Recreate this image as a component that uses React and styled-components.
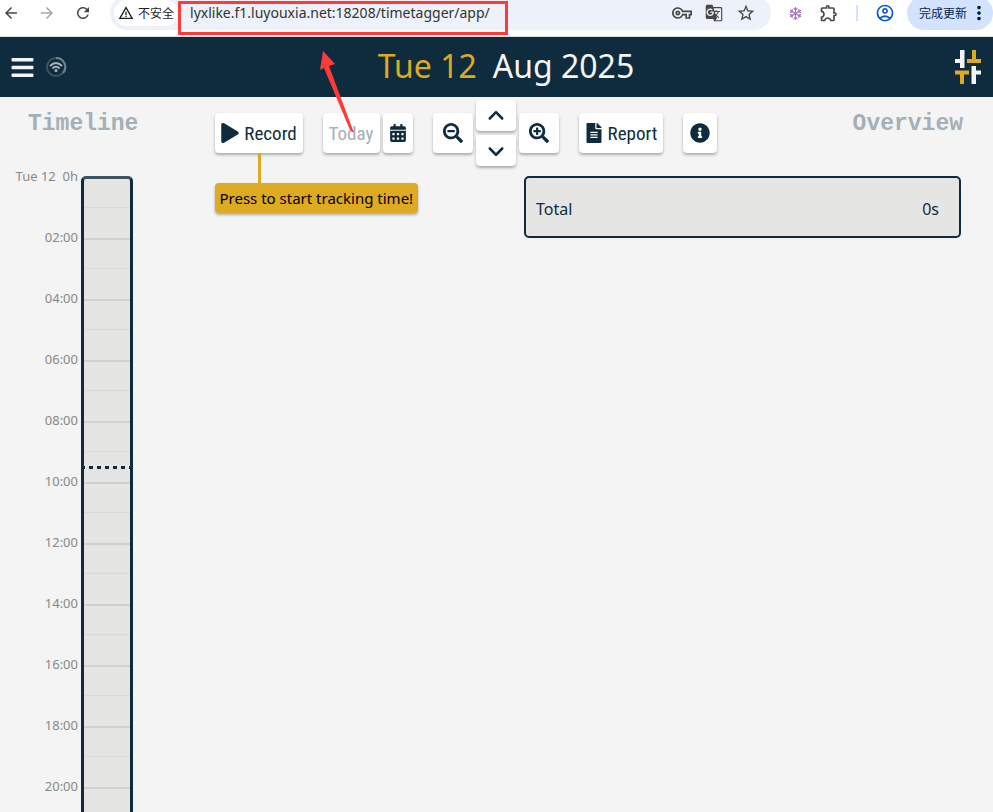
import styled, { createGlobalStyle } from "styled-components";
import {
  MdArrowBack,
  MdArrowForward,
  MdRefresh,
  MdWarningAmber,
  MdOutlineVpnKey,
  MdGTranslate,
  MdStarBorder,
  MdOutlineExtension,
  MdOutlineAccountCircle,
  MdMoreVert,
} from "react-icons/md";
import {
  FaPlay,
  FaCalendarAlt,
  FaSearchMinus,
  FaSearchPlus,
  FaFileAlt,
  FaInfoCircle,
  FaBars,
  FaRegSnowflake,
} from "react-icons/fa";
import { FaAngleUp, FaAngleDown } from "react-icons/fa6";

const hours = [
  "Tue 12  0h",
  "02:00",
  "04:00",
  "06:00",
  "08:00",
  "10:00",
  "12:00",
  "14:00",
  "16:00",
  "18:00",
  "20:00",
];

const HOUR_PAIR = 61;
const now = 9.5;

export default function App() {
  return (
    <Page>
      <GlobalStyle />
      <BrowserBar />
      <Header>
        <MenuButton aria-label="Menu">
          <FaBars size={25} />
        </MenuButton>
        <SyncIcon />
        <DateTitle>
          <Day>Tue 12</Day>
          <span>Aug 2025</span>
        </DateTitle>
        <Logo />
      </Header>
      <Controls>
        <Heading>Timeline</Heading>
        <Groups>
          <RecordWrapper>
            <Button $width={88}>
              <FaPlay size={20} />
              Record
            </Button>
            <Tip role="tooltip">Press to start tracking time!</Tip>
          </RecordWrapper>
          <Group>
            <Button $width={57} $faded>
              Today
            </Button>
            <Button $width={30} aria-label="Select date">
              <FaCalendarAlt size={18} />
            </Button>
          </Group>
          <Group>
            <Button $width={40} aria-label="Zoom out">
              <FaSearchMinus size={20} />
            </Button>
            <Stack>
              <Button $width={40} $short aria-label="Earlier">
                <FaAngleUp size={20} />
              </Button>
              <Button $width={40} $short aria-label="Later">
                <FaAngleDown size={20} />
              </Button>
            </Stack>
            <Button $width={40} aria-label="Zoom in">
              <FaSearchPlus size={20} />
            </Button>
          </Group>
          <Button $width={84}>
            <FaFileAlt size={20} />
            Report
          </Button>
          <Button $width={34} aria-label="Info">
            <FaInfoCircle size={20} />
          </Button>
        </Groups>
        <Heading>Overview</Heading>
      </Controls>
      <Content>
        <Labels>
          {hours.map((hour) => (
            <Label key={hour}>{hour}</Label>
          ))}
        </Labels>
        <Track>
          {hours.map((hour) => (
            <Slot key={hour} />
          ))}
          <NowLine style={{ top: (now / 2) * HOUR_PAIR - 3 }} />
        </Track>
        <Overview>
          <span>Total</span>
          <span>0s</span>
        </Overview>
      </Content>
    </Page>
  );
}

function BrowserBar() {
  return (
    <Bar>
      <IconButton aria-label="Back">
        <MdArrowBack size={18} />
      </IconButton>
      <IconButton aria-label="Forward" $color="#a5a5a5">
        <MdArrowForward size={18} />
      </IconButton>
      <IconButton aria-label="Reload">
        <MdRefresh size={18} />
      </IconButton>
      <AddressBar>
        <Security>
          <MdWarningAmber size={16} />
          不安全
        </Security>
        <UrlBox>
          <Url
            aria-label="Address"
            defaultValue="lyxlike.f1.luyouxia.net:18208/timetagger/app/"
          />
          <Highlight />
          <Arrow viewBox="0 0 36 84">
            <path
              d="M5 0L17 13L11 15L36 82L32 79L6 17L2 19Z"
              fill="#ff3a38"
            />
          </Arrow>
        </UrlBox>
        <AddressActions>
          <IconButton aria-label="Passwords">
            <MdOutlineVpnKey size={20} />
          </IconButton>
          <IconButton aria-label="Translate">
            <MdGTranslate size={18} />
          </IconButton>
          <IconButton aria-label="Bookmark">
            <MdStarBorder size={20} />
          </IconButton>
        </AddressActions>
      </AddressBar>
      <Extensions>
        <IconButton aria-label="Snowflake extension" $color="#a777bb">
          <FaRegSnowflake size={13} />
        </IconButton>
        <IconButton aria-label="Extensions">
          <MdOutlineExtension size={20} />
        </IconButton>
        <Divider />
        <IconButton aria-label="Profile" $color="#0b57d0">
          <MdOutlineAccountCircle size={20} />
        </IconButton>
      </Extensions>
      <Update>
        完成更新
        <MdMoreVert size={22} />
      </Update>
    </Bar>
  );
}

function SyncIcon() {
  return (
    <svg width="22" height="22" viewBox="0 0 22 22" fill="none">
      <circle cx="11" cy="11" r="9" stroke="#3c5463" strokeWidth="2" />
      <path d="M11 2A9 9 0 0 1 18 17" stroke="#71838d" strokeWidth="2" />
      <g stroke="#a9b4bb" strokeWidth="2">
        <path d="M5 10Q11 4 17 10" />
        <path d="M7.5 12.5Q11 9 14.5 12.5" />
      </g>
      <circle cx="11" cy="14.5" r="1.5" fill="#a9b4bb" />
    </svg>
  );
}

function Logo() {
  return (
    <svg width="26" height="34" viewBox="0 0 26 34">
      <path d="M5 0H9.5V18H5V13H0V9H5Z" fill="#f4f4f4" />
      <path d="M17 0H21V9H26V13H12V9H17Z" fill="#deaa22" />
      <path d="M0 20.5H14V24.5H9V34H5V24.5H0Z" fill="#deaa22" />
      <path d="M16.5 16H21V20.5H26V24.5H21V34H16.5Z" fill="#f4f4f4" />
    </svg>
  );
}

const GlobalStyle = createGlobalStyle`
  * {
    box-sizing: border-box;
  }
  body {
    margin: 0;
    background: #f4f4f4;
    color: #0f2c3e;
    font-family: "Noto Sans", "Noto Sans CJK SC", sans-serif;
  }
  button, input {
    font-family: inherit;
    border: 0;
    padding: 0;
    background: transparent;
    color: inherit;
  }
  svg {
    flex-shrink: 0;
  }
`;
const Page = styled.div`
  display: flex;
  flex-direction: column;
  height: 100vh;
  overflow: hidden;
`;
/* the top edge of the browser bar runs off the window */
const Bar = styled.div`
  display: flex;
  align-items: center;
  flex-shrink: 0;
  gap: 18px;
  margin-top: -4px;
  padding: 0 0 6px 2px;
  border-bottom: 1px solid #dcdcdc;
  background: #fff;
`;
const IconButton = styled.button`
  display: flex;
  color: ${({ $color }) => $color || "#474747"};
`;
const AddressBar = styled.div`
  display: flex;
  align-items: center;
  flex: 1;
  height: 34px;
  padding: 0 15px 0 4px;
  border-radius: 17px;
  background: #ecf1fa;
`;
const Security = styled.button`
  display: flex;
  align-items: center;
  gap: 4px;
  height: 26px;
  && {
    padding: 0 4px;
  }
  border-radius: 13px;
  background: #fff;
  font-size: 12px;
  color: #1f1f1f;
  white-space: nowrap;
`;
const UrlBox = styled.div`
  position: relative;
  display: flex;
  width: 330px;
`;
const Url = styled.input`
  width: 100%;
  && {
    padding: 0 12px;
  }
  font-size: 14px;
  line-height: 24px;
  color: #333;
  outline: 0;
`;
const Highlight = styled.div`
  position: absolute;
  inset: 0 0 -10px;
  border: 3px solid #ff3a38;
  pointer-events: none;
`;
const Arrow = styled.svg`
  position: absolute;
  top: 50px;
  left: 140px;
  z-index: 2;
  width: 36px;
  height: 84px;
  pointer-events: none;
`;
const AddressActions = styled.div`
  display: flex;
  align-items: center;
  gap: 13px;
  margin-left: auto;
`;
const Extensions = styled.div`
  display: flex;
  align-items: center;
  gap: 17px;
`;
const Divider = styled.span`
  width: 2px;
  height: 16px;
  background: #d3e3fd;
`;
const Update = styled.button`
  display: flex;
  align-items: center;
  height: 34px;
  gap: 1px;
  margin-left: -6px;
  && {
    padding: 0 3px 0 12px;
    background: #d3e3fd;
  }
  border-radius: 17px;
  font-size: 12px;
  color: #041e49;
  white-space: nowrap;
`;
const Header = styled.header`
  display: flex;
  align-items: center;
  flex-shrink: 0;
  height: 60px;
  padding: 0 12px 0 10px;
  background: #0f2c3e;
  color: #f4f4f4;
`;
const MenuButton = styled.button`
  display: flex;
  margin-right: 10px;
`;
const DateTitle = styled.h1`
  display: flex;
  justify-content: center;
  flex: 1;
  gap: 16px;
  margin: 0 10px 2px 0;
  font-size: 32px;
  font-weight: 400;
  line-height: 40px;
`;
const Day = styled.span`
  color: #deaa22;
`;
const Controls = styled.div`
  display: flex;
  justify-content: space-between;
  flex-shrink: 0;
  height: 79px;
  padding: 0 30px 0 28px;
`;
const Heading = styled.h2`
  margin: 13px 0 0;
  font-family: "Liberation Mono", monospace;
  font-size: 23px;
  font-weight: 700;
  line-height: 28px;
  color: #a3b0b7;
`;
const Groups = styled.div`
  display: flex;
  align-items: flex-start;
  gap: 20px;
  margin: 16px 60px 0 0;
`;
const Group = styled.div`
  display: flex;
  align-items: flex-start;
  gap: 3px;
`;
const RecordWrapper = styled.div`
  position: relative;
`;
const Stack = styled.div`
  display: flex;
  flex-direction: column;
  gap: 4px;
  margin-top: -13px;
`;
const Button = styled.button`
  display: flex;
  align-items: center;
  justify-content: center;
  gap: 4px;
  width: ${({ $width }) => $width}px;
  height: ${({ $short }) => ($short ? 31 : 40)}px;
  border-radius: 4px;
  && {
    background: #fff;
    color: ${({ $faded }) => ($faded ? "#a3b0b7" : "#0f2c3e")};
  }
  box-shadow: 0 2px 3px rgba(0, 0, 0, 0.3);
  font-family: "Ubuntu Condensed", "Roboto Condensed", "Noto Sans Condensed",
    "Open Sans Condensed", "Noto Sans", sans-serif;
  font-size: 19px;
  white-space: nowrap;
  cursor: pointer;
`;
const Tip = styled.div`
  position: absolute;
  top: 70px;
  left: 0;
  z-index: 1;
  padding: 0 5px;
  border-radius: 4px;
  background: #deaa22;
  box-shadow: 0 2px 3px rgba(0, 0, 0, 0.3);
  font-size: 15px;
  line-height: 30px;
  color: #000;
  white-space: nowrap;
  &::before {
    content: "";
    position: absolute;
    bottom: 100%;
    left: 43px;
    width: 3px;
    height: 30px;
    background: #deaa22;
  }
`;
const Content = styled.main`
  display: flex;
  align-items: flex-start;
  flex: 1;
  min-height: 0;
`;
const Labels = styled.div`
  width: 81px;
  padding-right: 3px;
  margin-top: -10px;
`;
const Label = styled.div`
  height: ${HOUR_PAIR}px;
  font-size: 13px;
  line-height: 20px;
  text-align: right;
  white-space: pre;
  color: #888;
`;
const Track = styled.div`
  position: relative;
  width: 52px;
  border: 3px solid #0f2c3e;
  border-top-color: #3d5362;
  border-radius: 5px;
  background: #e5e5e3;
`;
const Slot = styled.div`
  height: ${HOUR_PAIR}px;
  border-bottom: 2px solid #d0d0cf;
  background: linear-gradient(#dadad9, #dadad9) 0 28px / 100% 1px no-repeat;
`;
const NowLine = styled.div`
  position: absolute;
  left: 0;
  right: 0;
  height: 3px;
  background: repeating-linear-gradient(
    90deg,
    #0f2c3e 0 1px,
    transparent 1px 5px,
    #0f2c3e 5px 8px
  );
`;
const Overview = styled.section`
  display: flex;
  align-items: center;
  justify-content: space-between;
  width: 44%;
  height: 62px;
  margin: 0 32px 0 auto;
  padding: 4px 20px 0 10px;
  border: 2px solid #0f2c3e;
  border-radius: 5px;
  background: #e5e5e3;
  font-size: 16px;
`;
